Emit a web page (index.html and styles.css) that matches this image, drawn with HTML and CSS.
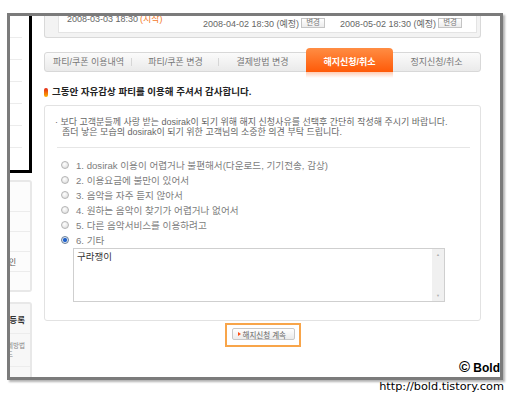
FILE: index.html
```html
<!DOCTYPE html>
<html>
<head>
    <title>해지신청/취소</title>
    <link rel="stylesheet" href="styles.css">
</head>
<body>
    <div class="frame">
        <div class="side">
            <div class="side-top">
                <div></div><div></div><div></div><div></div><div></div><div></div>
            </div>
            <div class="side-box first">
                <div class="side-row"></div>
                <div class="side-row"></div>
                <div class="side-row"></div>
                <div class="side-row"><span>공인인증서 확인</span></div>
                <div class="side-row last"></div>
            </div>
            <div class="side-box second">
                <div class="side-row big"><b>쿠폰 등록</b></div>
                <div class="side-row small">
                    <span class="l1">결제방법</span>
                    <span class="l2">가이드</span>
                </div>
                <div class="side-row last"></div>
            </div>
        </div>

        <div class="main">
            <div class="prev">
                <div class="prev-in">
                    <div class="date first">2008-03-03 18:30 <em>(시작)</em></div>
                    <div class="date">2008-04-02 18:30 (예정) <button class="btn-small">변경</button></div>
                    <div class="date">2008-05-02 18:30 (예정) <button class="btn-small">변경</button></div>
                </div>
            </div>

            <ul class="tabs">
                <li class="sep">파티/쿠폰 이용내역</li>
                <li class="sep">파티/쿠폰 변경</li>
                <li>결제방법 변경</li>
                <li class="on">해지신청/취소</li>
                <li>정지신청/취소</li>
            </ul>

            <h2 class="title"><span class="dot"></span>그동안 자유감상 파티를 이용해 주셔서 감사합니다.</h2>

            <div class="box">
                <p class="notice">· 보다 고객분들께 사랑 받는 dosirak이 되기 위해 해지 신청사유를 선택후 간단히 작성해 주시기 바랍니다.<br>좀더 낳은 모습의 dosirak이 되기 위한 고객님의 소중한 의견 부탁 드립니다.</p>
                <div class="line"></div>
                <ul class="reasons">
                    <li><span class="radio"></span>1. dosirak 이용이 어렵거나 불편해서(다운로드, 기기전송, 감상)</li>
                    <li><span class="radio"></span>2. 이용요금에 불만이 있어서</li>
                    <li><span class="radio"></span>3. 음악을 자주 듣지 않아서</li>
                    <li><span class="radio"></span>4. 원하는 음악이 찾기가 어렵거나 없어서</li>
                    <li><span class="radio"></span>5. 다른 음악서비스를 이용하려고</li>
                    <li><span class="radio checked"></span>6. 기타</li>
                </ul>
                <div class="memo">
                    <div class="memo-text">구라쟁이</div>
                    <div class="scroll"><span>▲</span><span>▼</span></div>
                </div>
            </div>

            <div class="actions">
                <span class="btn-wrap"><button class="btn"><i class="arrow"></i>해지신청 계속</button></span>
            </div>
        </div>

        <div class="mark"><span>©</span> Bold</div>
    </div>
    <div class="url">http://bold.tistory.com</div>
</body>
</html>
```

FILE: styles.css
```css
body {
    margin: 0;
    background: #fff;
    font-family: "Liberation Sans", "Noto Sans CJK KR", sans-serif;
    color: #666;
}

/* captured window */
.frame {
    position: relative;
    display: flex;
    width: 490px;
    height: 361px;
    margin: 13px 0 0 7px;
    border: 3px solid #7b7b7b;
    box-shadow: 2px 2px 2px rgba(0,0,0,0.3);
    overflow: hidden;
    background: #fff;
}

/* left menu, cut off */
.side {
    width: 23px;
    flex-shrink: 0;
    overflow: hidden;
}
.side-top {
    width: 19px;
    height: 154px;
    border-right: 3px solid #000;
    border-bottom: 3px solid #000;
}
.side-top div {
    height: 21px;
    margin-right: 7px;
    border-bottom: 1px solid #ececec;
}
.side-box {
    width: 20px;
    border: 2px solid #e8e8e8;
    border-left: 0;
    border-radius: 0 3px 3px 0;
    background: #fcfcfc;
}
.side-box.first {
    margin-top: 7px;
    padding-top: 10px;
}
.side-box.second {
    margin-top: 10px;
    background: #f7f7f7;
}
.side-row {
    display: flex;
    justify-content: flex-end;
    align-items: center;
    height: 19px;
    padding-right: 14px;
    border-bottom: 1px solid #ececec;
    font-size: 8px;
    color: #555;
    white-space: nowrap;
}
.side-row.last {
    border-bottom: 0;
    height: 18px;
}
.side-row.big {
    height: 29px;
    padding-right: 5px;
    font-size: 8.5px;
    color: #333;
}
.side-row.small {
    flex-direction: column;
    align-items: flex-end;
    justify-content: center;
    height: 32px;
    padding-right: 5px;
    font-size: 6.5px;
    line-height: 9px;
    color: #888;
}
.side-row.small .l2 {
    margin-right: 12px;
}

/* main column */
.main {
    flex: 1;
    min-width: 0;
    padding: 0 19px 0 11px;
}

.prev {
    box-sizing: border-box;
    height: 30px;
    margin-top: -8px;
    padding: 0 3px 4px 13px;
    border: 1px solid #d9d9d9;
    border-top: 0;
    border-radius: 0 0 3px 3px;
    background: #f3f3f3;
}
.prev-in {
    box-sizing: border-box;
    height: 100%;
    display: grid;
    grid-template-columns: 136px 137px auto;
    align-items: start;
    padding-left: 8px;
    border: 1px solid #e4e4e4;
    border-top: 0;
    background: #fff;
}
.date {
    display: flex;
    align-items: center;
    margin-top: 10px;
    height: 10px;
    font-size: 9px;
    color: #666;
    white-space: nowrap;
}
.date.first {
    margin-top: 5px;
    height: 11px;
}
.date em {
    font-style: normal;
    color: #f47a2a;
    margin-left: 2px;
}
.btn-small {
    box-sizing: border-box;
    height: 10px;
    width: 24px;
    margin-left: 2px;
    padding: 0;
    border: 1px solid #c4c4c4;
    background: linear-gradient(#fff, #ececec);
    font-family: inherit;
    font-size: 7.5px;
    line-height: 8px;
    color: #777;
}

/* tabs */
.tabs {
    display: flex;
    height: 18px;
    margin: 14px 0 0;
    padding: 0;
    list-style: none;
    border: 1px solid #d8d8d8;
    border-radius: 3px;
    background: linear-gradient(#fbfbfb, #eaeaea);
}
.tabs li {
    position: relative;
    flex: 1;
    text-align: center;
    line-height: 18px;
    font-size: 9px;
    color: #777;
    white-space: nowrap;
}
.tabs li.sep::after {
    content: "";
    position: absolute;
    right: 0;
    top: 5px;
    width: 1px;
    height: 8px;
    background: #d6d6d6;
}
.tabs li.on {
    margin: -5px 0 -1px;
    padding: 5px 0 1px;
    border-radius: 4px 4px 0 0;
    background: linear-gradient(#ff8d44, #ff5a08);
    color: #fff;
    font-weight: bold;
}
.tabs li.on::after {
    content: "";
    position: absolute;
    left: 0;
    right: 0;
    top: 100%;
    height: 6px;
    background: linear-gradient(rgba(255,110,40,0.35), rgba(255,255,255,0));
}

.title {
    display: flex;
    align-items: center;
    margin: 14px 0 0;
    font-size: 9.5px;
    line-height: 12px;
    font-weight: bold;
    color: #222;
}
.title .dot {
    width: 4px;
    height: 9px;
    margin-right: 4px;
    border-radius: 2px;
    background: linear-gradient(#e3261b, #ffb400);
}

/* form box */
.box {
    margin-top: 7px;
    padding: 11px 0 18px;
    border: 1px solid #e2e2e2;
    border-radius: 3px;
}
.notice {
    margin: 0 10px;
    padding-left: 7px;
    text-indent: -7px;
    font-size: 9px;
    line-height: 10px;
    color: #666;
}
.line {
    margin: 10px 10px 0 12px;
    border-top: 1px solid #e6e6e6;
}
.reasons {
    margin: 0;
    padding: 9px 0 0 16px;
    list-style: none;
}
.reasons li {
    display: flex;
    align-items: center;
    height: 15px;
    font-size: 9.6px;
    color: #7d7d7d;
    white-space: nowrap;
}
.radio {
    box-sizing: border-box;
    width: 8px;
    height: 8px;
    margin-right: 7px;
    border: 1px solid #b4b4b4;
    border-radius: 50%;
    background: radial-gradient(circle at 40% 35%, #fff, #d8d8d8);
}
.radio.checked {
    border-color: #6a7f9a;
    background: radial-gradient(circle, #1d5cc4 0, #2b6ad0 1.8px, #dfe8f3 2.4px, #c8d0da 100%);
}
.memo {
    display: flex;
    box-sizing: border-box;
    width: 372px;
    height: 54px;
    margin: 1px 0 0 28px;
    border: 1px solid #cfcfcf;
}
.memo-text {
    flex: 1;
    padding: 2px 3px;
    font-size: 9.5px;
    line-height: 11px;
    color: #333;
}
.scroll {
    display: flex;
    flex-direction: column;
    justify-content: space-between;
    align-items: center;
    width: 12px;
    padding: 3px 0;
    background: #f0f0f0;
    font-size: 4px;
    line-height: 5px;
    color: #b0b0b0;
}

.actions {
    margin-top: 1px;
    text-align: center;
}
.btn-wrap {
    display: inline-block;
    padding: 3px 4px 5px 5px;
    border: 2px solid #f8a54a;
}
.btn {
    display: flex;
    align-items: center;
    box-sizing: border-box;
    width: 63px;
    height: 12px;
    padding: 0 0 0 5px;
    border: 1px solid #c8c8c8;
    border-radius: 2px;
    background: linear-gradient(#fff, #ebebeb);
    font-family: inherit;
    font-size: 7.5px;
    color: #666;
    white-space: nowrap;
}
.btn .arrow {
    width: 0;
    height: 0;
    margin-right: 2px;
    border-left: 3px solid #ff4f14;
    border-top: 2.5px solid transparent;
    border-bottom: 2.5px solid transparent;
}

/* watermark */
.mark {
    position: absolute;
    right: 0;
    bottom: 3px;
    font-size: 12px;
    line-height: 12px;
    font-weight: bold;
    color: #000;
}
.mark span {
    font-size: 15px;
}

.url {
    padding-right: 9px;
    text-align: right;
    font-family: "DejaVu Sans", sans-serif;
    font-size: 11.3px;
    line-height: 14px;
    color: #000;
}
```
